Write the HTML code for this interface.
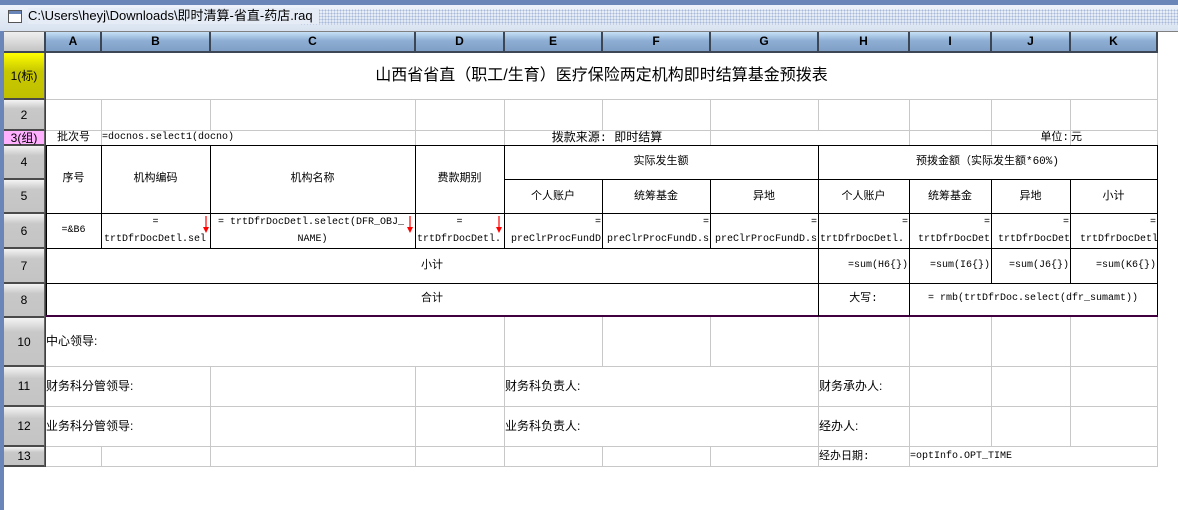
<!DOCTYPE html>
<html><head><meta charset="utf-8"><style>
*{margin:0;padding:0;box-sizing:border-box}
body{width:1178px;height:510px;overflow:hidden;background:#fff;position:relative;font-family:"Liberation Mono","Noto Sans CJK SC",monospace;font-size:11px;color:#000}
.a{position:absolute}
.g{position:absolute;background:#c8c8c8}
.k{position:absolute;background:#000}
.ch{position:absolute;top:32px;height:21px;background:linear-gradient(#c6e0f6,#8eaed4 45%,#7f9fc6);border-right:2px solid #3c4654;border-bottom:2px solid #3c4654;font:bold 12px "Liberation Sans",sans-serif;text-align:center;line-height:19px}
.rh{position:absolute;left:4px;width:41px;background:linear-gradient(#f4f4f4,#c8c8c8 30%,#c4c4c4);border-bottom:2px solid #4a4a4a;border-right:1px solid #666;font:12px "Liberation Sans","Noto Sans CJK SC",sans-serif;text-align:center;display:flex;align-items:center;justify-content:center}
.t{position:absolute;white-space:nowrap;font-family:"Liberation Mono","Noto Sans CJK SC",monospace;font-size:11px;line-height:14px}
.f{font-size:10px}
.c{text-align:center}
.s{font-family:"Liberation Sans","Noto Sans CJK SC",sans-serif;font-size:12px}
.arr{position:absolute;width:8px;height:18px}
</style></head><body>
<div class="a" style="left:0;top:0;width:1178px;height:5px;background:#6a86b8"></div>
<div class="a" style="left:0;top:5px;width:1178px;height:26px;background:linear-gradient(#eef3fa,#d8e2f0)"></div>
<div class="a" style="left:300px;top:9px;width:878px;height:16px;background-image:radial-gradient(#a8b8d8 0.8px,transparent 1px);background-size:3px 3px"></div>
<div class="a" style="left:8px;top:10px;width:14px;height:13px;border:1px solid #555;background:#fff"><div style="height:3px;background:#6a86b8"></div></div>
<div class="a s" style="left:28px;top:8px;font-size:13px;line-height:16px;background:#e6ecf6;padding-right:6px">C:\Users\heyj\Downloads\即时清算-省直-药店.raq</div>
<div class="a" style="left:0;top:31px;width:4px;height:479px;background:#6a86b8"></div>
<div class="a" style="left:4px;top:31px;width:1174px;height:1px;background:#808080"></div>

<div class="a" style="left:4px;top:32px;width:42px;height:21px;background:linear-gradient(#f0f0f0,#c4c4c4);border-right:2px solid #3c4654;border-bottom:2px solid #3c4654"></div>
<div class="ch" style="left:46px;width:56px">A</div>
<div class="ch" style="left:102px;width:109px">B</div>
<div class="ch" style="left:211px;width:205px">C</div>
<div class="ch" style="left:416px;width:89px">D</div>
<div class="ch" style="left:505px;width:98px">E</div>
<div class="ch" style="left:603px;width:108px">F</div>
<div class="ch" style="left:711px;width:108px">G</div>
<div class="ch" style="left:819px;width:91px">H</div>
<div class="ch" style="left:910px;width:82px">I</div>
<div class="ch" style="left:992px;width:79px">J</div>
<div class="ch" style="left:1071px;width:87px">K</div>

<div class="rh" style="top:53px;height:47px;background:linear-gradient(#ffff00,#c8c800 40%,#c0c000)">1(标)</div>
<div class="rh" style="top:100px;height:31px">2</div>
<div class="rh" style="top:131px;height:15px;background:#ffb0ff;font-size:12px">3(组)</div>
<div class="rh" style="top:146px;height:34px">4</div>
<div class="rh" style="top:180px;height:34px">5</div>
<div class="rh" style="top:214px;height:35px">6</div>
<div class="rh" style="top:249px;height:35px">7</div>
<div class="rh" style="top:284px;height:34px">8</div>
<div class="rh" style="top:318px;height:49px">10</div>
<div class="rh" style="top:367px;height:40px">11</div>
<div class="rh" style="top:407px;height:40px">12</div>
<div class="rh" style="top:447px;height:20px">13</div>
<div class="a" style="left:45px;top:53px;width:1px;height:414px;background:#404040"></div>

<div class="g" style="left:46px;top:99px;width:1112px;height:1px"></div>
<div class="g" style="left:46px;top:130px;width:1112px;height:1px"></div>
<div class="g" style="left:1157px;top:53px;width:1px;height:93px"></div>
<div class="g" style="left:101px;top:100px;width:1px;height:46px"></div>
<div class="g" style="left:210px;top:100px;width:1px;height:30px"></div>
<div class="g" style="left:415px;top:100px;width:1px;height:46px"></div>
<div class="g" style="left:504px;top:100px;width:1px;height:46px"></div>
<div class="g" style="left:602px;top:100px;width:1px;height:30px"></div>
<div class="g" style="left:710px;top:100px;width:1px;height:46px"></div>
<div class="g" style="left:818px;top:100px;width:1px;height:30px"></div>
<div class="g" style="left:909px;top:100px;width:1px;height:46px"></div>
<div class="g" style="left:991px;top:100px;width:1px;height:46px"></div>
<div class="g" style="left:1070px;top:100px;width:1px;height:46px"></div>
<div class="g" style="left:46px;top:366px;width:1112px;height:1px"></div>
<div class="g" style="left:46px;top:406px;width:1112px;height:1px"></div>
<div class="g" style="left:46px;top:446px;width:1112px;height:1px"></div>
<div class="g" style="left:46px;top:466px;width:1112px;height:1px"></div>
<div class="g" style="left:1157px;top:317px;width:1px;height:150px"></div>
<div class="g" style="left:101px;top:447px;width:1px;height:20px"></div>
<div class="g" style="left:210px;top:367px;width:1px;height:100px"></div>
<div class="g" style="left:415px;top:367px;width:1px;height:100px"></div>
<div class="g" style="left:504px;top:317px;width:1px;height:150px"></div>
<div class="g" style="left:602px;top:317px;width:1px;height:50px"></div>
<div class="g" style="left:602px;top:447px;width:1px;height:20px"></div>
<div class="g" style="left:710px;top:317px;width:1px;height:50px"></div>
<div class="g" style="left:710px;top:447px;width:1px;height:20px"></div>
<div class="g" style="left:818px;top:317px;width:1px;height:150px"></div>
<div class="g" style="left:909px;top:317px;width:1px;height:150px"></div>
<div class="g" style="left:991px;top:317px;width:1px;height:130px"></div>
<div class="g" style="left:1070px;top:317px;width:1px;height:130px"></div>

<div class="k" style="left:46px;top:145px;width:1112px;height:1px"></div>
<div class="k" style="left:46px;top:145px;width:1px;height:172px"></div>
<div class="k" style="left:1157px;top:145px;width:1px;height:172px"></div>
<div class="a" style="left:46px;top:315px;width:1112px;height:2px;background:#400040"></div>
<div class="k" style="left:504px;top:179px;width:654px;height:1px"></div>
<div class="k" style="left:46px;top:213px;width:1112px;height:1px"></div>
<div class="k" style="left:46px;top:248px;width:1112px;height:1px"></div>
<div class="k" style="left:46px;top:283px;width:1112px;height:1px"></div>
<div class="k" style="left:101px;top:146px;width:1px;height:102px"></div>
<div class="k" style="left:210px;top:146px;width:1px;height:102px"></div>
<div class="k" style="left:415px;top:146px;width:1px;height:102px"></div>
<div class="k" style="left:504px;top:146px;width:1px;height:102px"></div>
<div class="k" style="left:602px;top:180px;width:1px;height:68px"></div>
<div class="k" style="left:710px;top:180px;width:1px;height:68px"></div>
<div class="k" style="left:818px;top:146px;width:1px;height:170px"></div>
<div class="k" style="left:909px;top:180px;width:1px;height:136px"></div>
<div class="k" style="left:991px;top:180px;width:1px;height:103px"></div>
<div class="k" style="left:1070px;top:180px;width:1px;height:103px"></div>

<div class="t c s" style="left:46px;top:66px;width:1111px;font-size:16px;line-height:20px">山西省省直（职工/生育）医疗保险两定机构即时结算基金预拨表</div>
<div class="t c" style="left:46px;top:131px;width:55px">批次号</div>
<div class="t f" style="left:102px;top:131px">=docnos.select1(docno)</div>
<div class="t c" style="left:504px;top:131px;width:206px;font-size:12px">拨款来源: 即时结算</div>
<div class="t" style="left:991px;top:131px;width:78px;text-align:right">单位:</div>
<div class="t" style="left:1071px;top:131px">元</div>

<div class="t c" style="left:46px;top:172px;width:55px">序号</div>
<div class="t c" style="left:101px;top:172px;width:109px">机构编码</div>
<div class="t c" style="left:210px;top:172px;width:205px">机构名称</div>
<div class="t c" style="left:415px;top:172px;width:89px">费款期别</div>
<div class="t c" style="left:504px;top:155px;width:314px">实际发生额</div>
<div class="t c" style="left:818px;top:155px;width:339px">预拨金额（实际发生额*60%)</div>
<div class="t c" style="left:504px;top:190px;width:98px">个人账户</div>
<div class="t c" style="left:602px;top:190px;width:108px">统筹基金</div>
<div class="t c" style="left:710px;top:190px;width:108px">异地</div>
<div class="t c" style="left:818px;top:190px;width:91px">个人账户</div>
<div class="t c" style="left:909px;top:190px;width:82px">统筹基金</div>
<div class="t c" style="left:991px;top:190px;width:79px">异地</div>
<div class="t c" style="left:1070px;top:190px;width:87px">小计</div>

<div class="t c f" style="left:46px;top:224px;width:55px">=&amp;B6</div>
<div class="t c f" style="left:101px;top:216px;width:109px">=</div>
<div class="t f" style="left:104px;top:233px">trtDfrDocDetl.sel</div>
<div class="t f" style="left:218px;top:216px">= trtDfrDocDetl.select(DFR_OBJ_</div>
<div class="t c f" style="left:210px;top:233px;width:205px">NAME)</div>
<div class="t c f" style="left:415px;top:216px;width:89px">=</div>
<div class="t f" style="left:417px;top:233px">trtDfrDocDetl.</div>
<svg class="arr" style="left:202px;top:216px" viewBox="0 0 8 18"><path d="M4 0V15" stroke="#f00" stroke-width="1.2"/><path d="M1 11L4 17L7 11Z" fill="#f00"/></svg>
<svg class="arr" style="left:406px;top:216px" viewBox="0 0 8 18"><path d="M4 0V15" stroke="#f00" stroke-width="1.2"/><path d="M1 11L4 17L7 11Z" fill="#f00"/></svg>
<svg class="arr" style="left:495px;top:216px" viewBox="0 0 8 18"><path d="M4 0V15" stroke="#f00" stroke-width="1.2"/><path d="M1 11L4 17L7 11Z" fill="#f00"/></svg>
<div class="t f" style="left:505px;top:216px;width:96px;text-align:right">=</div>
<div class="t f" style="left:511px;top:233px;width:91px;overflow:hidden">preClrProcFundD</div>
<div class="t f" style="left:603px;top:216px;width:106px;text-align:right">=</div>
<div class="t f" style="left:607px;top:233px;width:103px;overflow:hidden">preClrProcFundD.s</div>
<div class="t f" style="left:711px;top:216px;width:106px;text-align:right">=</div>
<div class="t f" style="left:715px;top:233px;width:103px;overflow:hidden">preClrProcFundD.s</div>
<div class="t f" style="left:819px;top:216px;width:89px;text-align:right">=</div>
<div class="t f" style="left:820px;top:233px;width:89px;overflow:hidden">trtDfrDocDetl.</div>
<div class="t f" style="left:910px;top:216px;width:80px;text-align:right">=</div>
<div class="t f" style="left:918px;top:233px;width:73px;overflow:hidden">trtDfrDocDet</div>
<div class="t f" style="left:992px;top:216px;width:77px;text-align:right">=</div>
<div class="t f" style="left:998px;top:233px;width:72px;overflow:hidden">trtDfrDocDet</div>
<div class="t f" style="left:1071px;top:216px;width:85px;text-align:right">=</div>
<div class="t f" style="left:1080px;top:233px;width:77px;overflow:hidden">trtDfrDocDetl</div>

<div class="t" style="left:421px;top:259px">小计</div>
<div class="t f" style="left:819px;top:259px;width:89px;text-align:right">=sum(H6{})</div>
<div class="t f" style="left:910px;top:259px;width:80px;text-align:right">=sum(I6{})</div>
<div class="t f" style="left:992px;top:259px;width:77px;text-align:right">=sum(J6{})</div>
<div class="t f" style="left:1071px;top:259px;width:85px;text-align:right">=sum(K6{})</div>
<div class="t" style="left:421px;top:292px">合计</div>
<div class="t c" style="left:818px;top:292px;width:91px">大写:</div>
<div class="t c f" style="left:909px;top:292px;width:248px">= rmb(trtDfrDoc.select(dfr_sumamt))</div>

<div class="t s" style="left:46px;top:334px">中心领导:</div>
<div class="t s" style="left:46px;top:379px">财务科分管领导:</div>
<div class="t s" style="left:505px;top:379px">财务科负责人:</div>
<div class="t s" style="left:819px;top:379px">财务承办人:</div>
<div class="t s" style="left:46px;top:419px">业务科分管领导:</div>
<div class="t s" style="left:505px;top:419px">业务科负责人:</div>
<div class="t s" style="left:819px;top:419px">经办人:</div>
<div class="t" style="left:819px;top:450px">经办日期:</div>
<div class="t f" style="left:910px;top:450px">=optInfo.OPT_TIME</div>
</body></html>
